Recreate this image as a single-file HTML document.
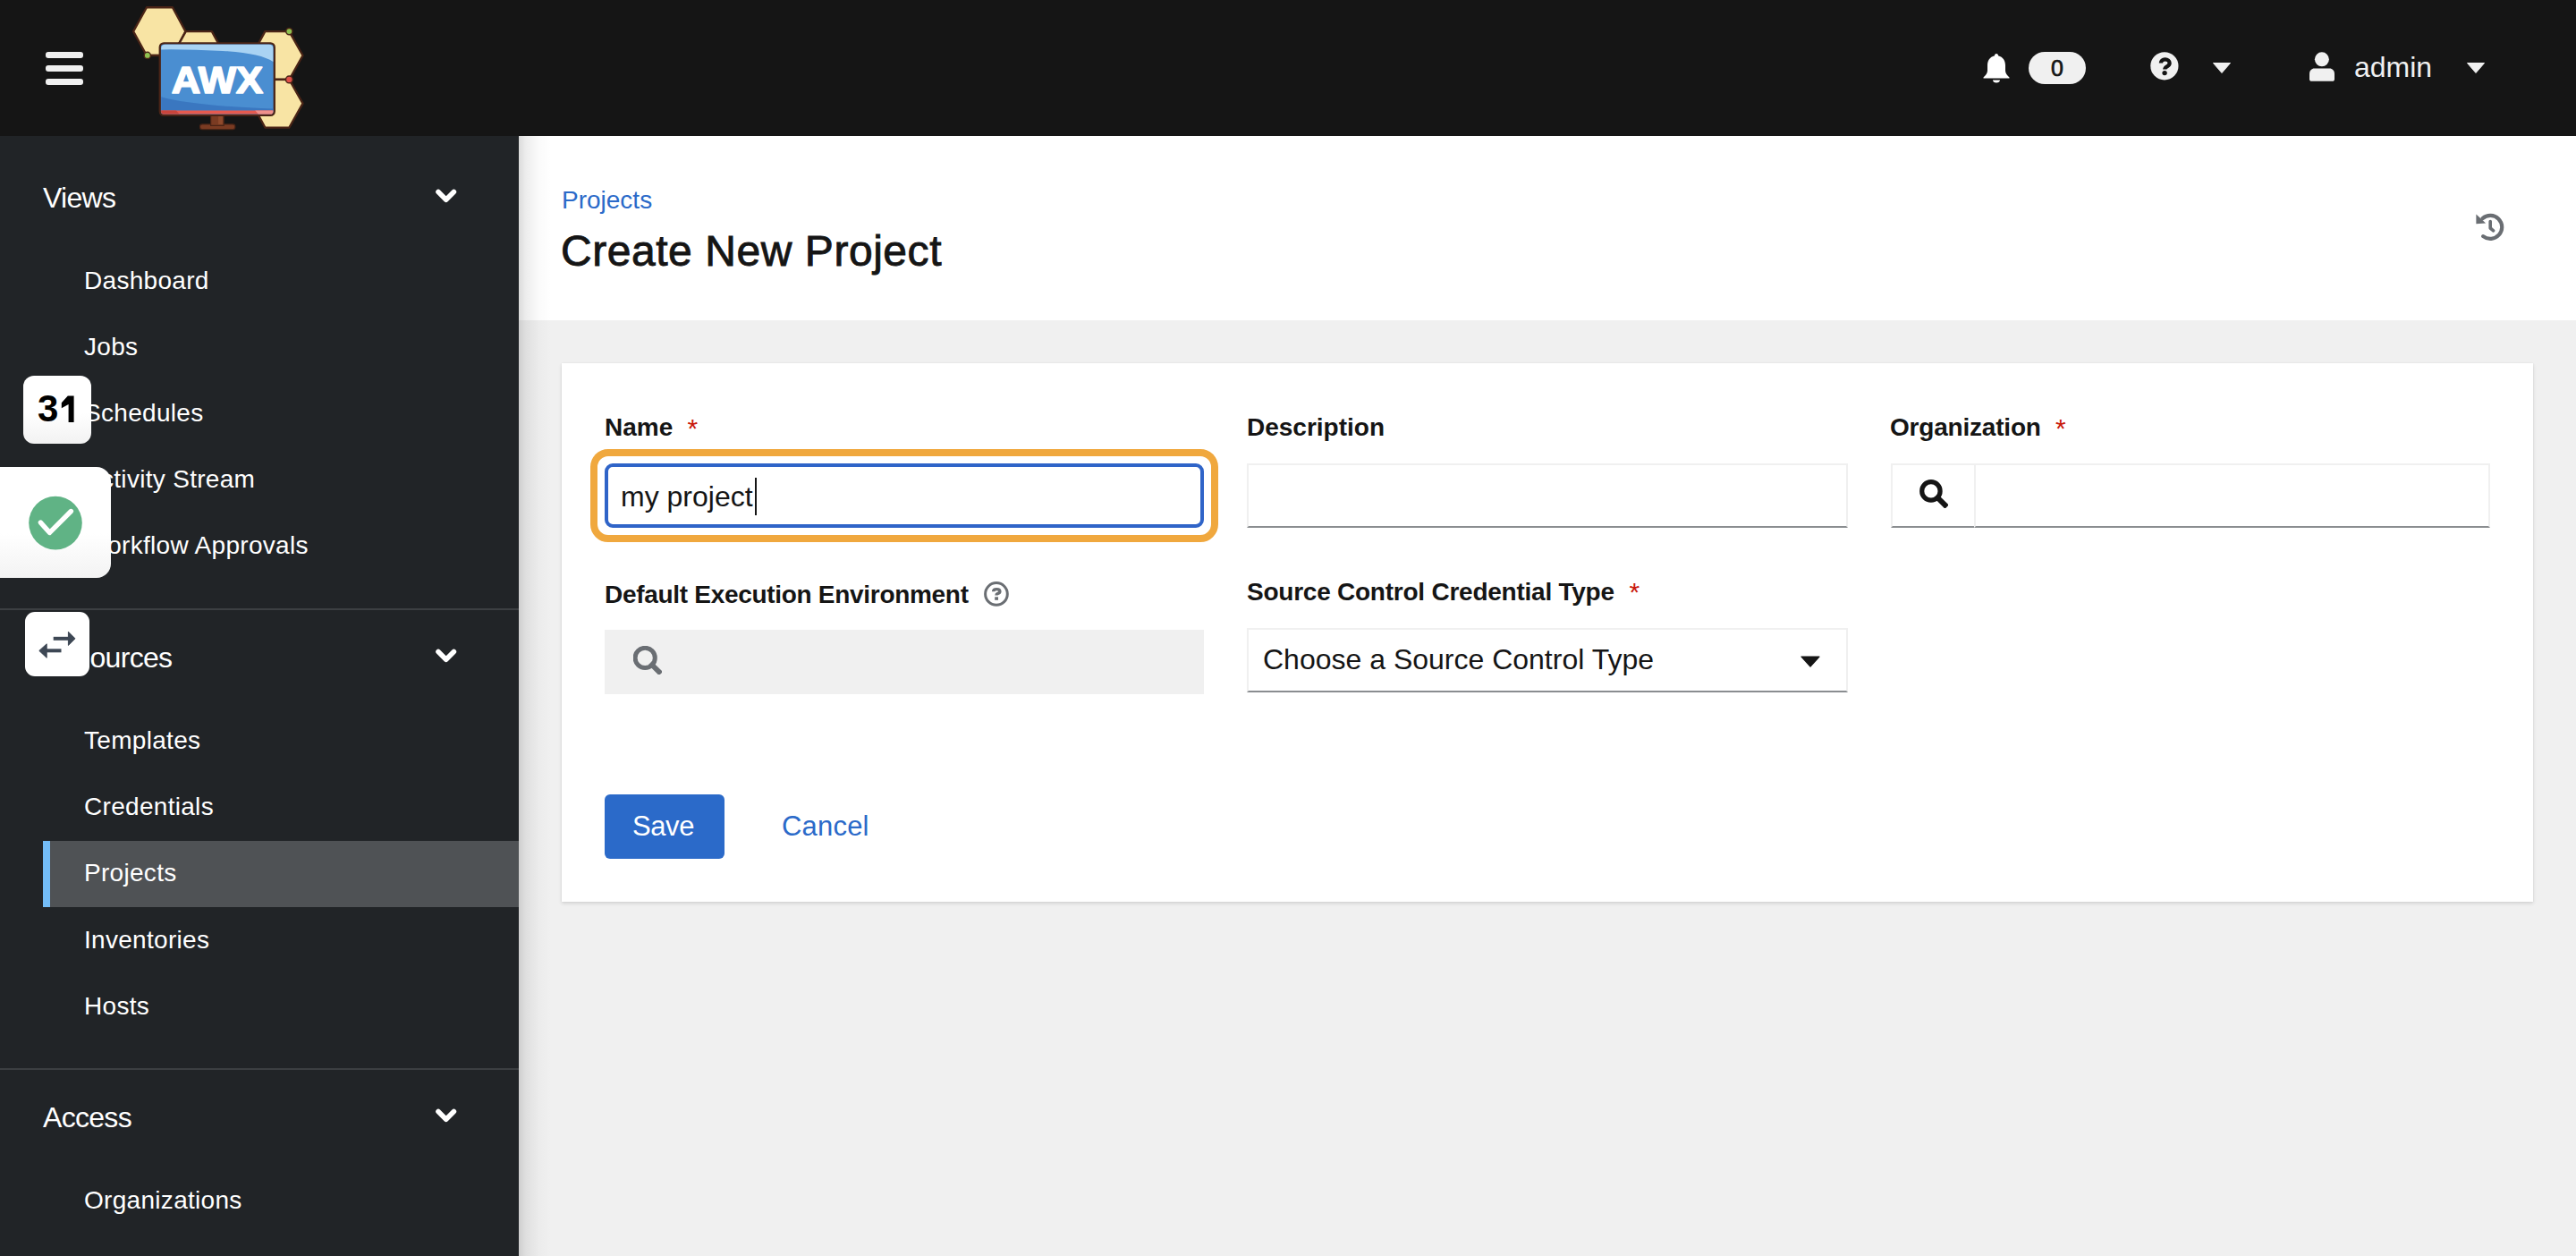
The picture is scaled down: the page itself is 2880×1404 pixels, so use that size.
<!DOCTYPE html>
<html><head><meta charset="utf-8">
<style>
*{margin:0;padding:0;box-sizing:border-box}
html,body{width:2880px;height:1404px;overflow:hidden;background:#f0f0f0;font-family:"Liberation Sans",sans-serif}
.a{position:absolute;white-space:nowrap}
#mast{position:absolute;left:0;top:0;width:2880px;height:152px;background:#151515}
#side{position:absolute;left:0;top:152px;width:580px;height:1252px;background:#212427}
#phead{position:absolute;left:580px;top:152px;width:2300px;height:206px;background:#fff}
#shadow{position:absolute;left:580px;top:152px;width:36px;height:1252px;background:linear-gradient(to right,rgba(0,0,0,.14),rgba(0,0,0,.07) 8px,rgba(0,0,0,.02) 22px,rgba(0,0,0,0))}
#card{position:absolute;left:628px;top:406px;width:2204px;height:602px;background:#fff;box-shadow:0 2px 4px rgba(3,3,3,.12),0 0 2px rgba(3,3,3,.06)}
.nav{color:#fff;font-size:28px;line-height:28px;letter-spacing:0.3px}
.sect{color:#fff;font-size:32px;line-height:32px;letter-spacing:-0.7px}
.sep{position:absolute;left:0;width:580px;height:2px;background:#3c3f42}
.lbl{color:#151515;font-size:28px;line-height:28px;font-weight:bold}
.req{color:#c9190b;font-size:30px;line-height:30px;font-weight:normal}
.inp{position:absolute;background:#fff;border:2px solid #f0f0f0;border-bottom-color:#8a8d90}
</style></head><body>
<div id="mast">
<div class="a" style="left:51px;top:57.6px;width:42px;height:7.2px;border-radius:3px;background:#f0f0f0"></div>
<div class="a" style="left:51px;top:72.7px;width:42px;height:7.2px;border-radius:3px;background:#f0f0f0"></div>
<div class="a" style="left:51px;top:87.8px;width:42px;height:7.2px;border-radius:3px;background:#f0f0f0"></div>
<svg class="a" style="left:140px;top:0" width="210" height="152" viewBox="0 0 1735 1256">
 <g stroke="#4a2416" stroke-width="19" stroke-linejoin="round" fill="#f8e4a4">
  <polygon points="75,290 198,68 437,68 557,290 437,512 198,512"/>
  <polygon points="437,512 560,290 800,290 920,512 800,734 560,734"/>
  <polygon points="1172,512 1292,290 1515,290 1640,512 1515,735 1292,735"/>
  <polygon points="1172,955 1292,735 1515,735 1640,955 1515,1178 1292,1178"/>
  <line x1="205" y1="512" x2="330" y2="512"/>
  <line x1="1370" y1="735" x2="1515" y2="735"/>
 </g>
 <rect x="690" y="1148" width="325" height="48" rx="22" fill="#7a3b22" stroke="#4a2416" stroke-width="10"/>
 <rect x="790" y="1060" width="120" height="100" fill="#7a3b22" stroke="#4a2416" stroke-width="10"/>
 <rect x="860" y="1070" width="40" height="78" fill="#8f4a2c"/>
 <rect x="320" y="400" width="1058" height="665" rx="36" fill="#4a8ed1" stroke="#4a2416" stroke-width="19"/>
 <path d="M332 450 Q332 412 370 412 L1328 412 Q1366 412 1366 450 L1366 570 Q1250 490 900 470 Q600 455 332 458 Z" fill="#a9d3f3"/>
 <path d="M332 895 Q600 975 1366 1005 L1366 1022 L332 1022 Z" fill="#3a77c0"/>
 <path d="M332 1020 L1366 1020 L1366 1028 Q1366 1054 1340 1054 L358 1054 Q332 1054 332 1028 Z" fill="#e65a4f"/>
 <path d="M332 1020 L470 1020 L500 1054 L358 1054 Q332 1054 332 1028 Z" fill="#c9443b"/>
 <path d="M1200 1020 L1366 1020 L1366 1028 Q1366 1054 1340 1054 L1230 1054 Z" fill="#f0908a"/>
 <text x="850" y="860" text-anchor="middle" font-family="Liberation Sans" font-weight="bold" font-size="345" fill="#fff" stroke="#fff" stroke-width="14" stroke-linejoin="round" textLength="845" lengthAdjust="spacingAndGlyphs">AWX</text>
 <g stroke="#4a2416" stroke-width="12">
  <circle cx="205" cy="512" r="30" fill="#8fc250"/>
  <circle cx="1515" cy="290" r="30" fill="#8fc250"/>
  <circle cx="1515" cy="735" r="32" fill="#e05048"/>
 </g>
</svg>
<svg class="a" style="left:2217px;top:60px" width="30" height="33" viewBox="0 0 30 33"><path d="M15 0 C16.5 0 17 1 17 2.2 C22.5 3.5 25 8 25 13 L25 19 C25 22 27 24 29.5 26.5 L29.5 27.5 L0.5 27.5 L0.5 26.5 C3 24 5 22 5 19 L5 13 C5 8 7.5 3.5 13 2.2 C13 1 13.5 0 15 0 Z M11 29.5 L19 29.5 C19 31.5 17.3 32.5 15 32.5 C12.7 32.5 11 31.5 11 29.5 Z" fill="#fff"/></svg>
<div class="a" style="left:2268px;top:58px;width:64px;height:36px;border-radius:18px;background:#f0f0f0;color:#151515;font-size:25px;line-height:36px;text-align:center;-webkit-text-stroke:0.7px #151515">0</div>
<svg class="a" style="left:2404px;top:58px" width="32" height="32" viewBox="0 0 32 32"><circle cx="15.9" cy="15.8" r="15.6" fill="#f0f0f0"/><path d="M11.9 12.6 C11.9 10 13.8 8.4 16.6 8.4 C19.6 8.4 21.6 10.2 21.6 12.6 C21.6 15 19.8 15.8 18.4 16.6 C17.2 17.3 16.3 18 16.3 19.6" fill="none" stroke="#151515" stroke-width="4.3"/><circle cx="16.1" cy="23.6" r="2.7" fill="#151515"/></svg>
<svg class="a" style="left:2474px;top:69.5px" width="20" height="12" viewBox="0 0 20 12"><path d="M0.5 0.5 L19.5 0.5 L10 11.5 Z" fill="#f0f0f0" stroke="#f0f0f0" stroke-width="1" stroke-linejoin="round"/></svg>
<svg class="a" style="left:2581px;top:57.5px" width="30" height="33" viewBox="0 0 30 33"><circle cx="14.9" cy="8.3" r="8" fill="#f0f0f0"/><path d="M6.5 18.5 L23.5 18.5 C26.5 18.5 29 21 29 24.5 L29 30.5 C29 32 28 32.8 26.7 32.8 L3.3 32.8 C2 32.8 1 32 1 30.5 L1 24.5 C1 21 3.5 18.5 6.5 18.5 Z" fill="#f0f0f0"/></svg>
<div class="a" style="left:2632px;top:59px;color:#f0f0f0;font-size:32px;line-height:32px">admin</div>
<svg class="a" style="left:2758px;top:70px" width="20" height="12" viewBox="0 0 20 12"><path d="M0.5 0.5 L19.5 0.5 L10 11.5 Z" fill="#f0f0f0" stroke="#f0f0f0" stroke-width="1" stroke-linejoin="round"/></svg>
</div>
<div id="side"></div>
<div class="a sect" style="left:48px;top:205px">Views</div><svg class="a" style="left:484px;top:210px" width="30" height="22" viewBox="0 0 30 22"><path d="M6 4.5 L14.7 13.2 L23.4 4.5" fill="none" stroke="#fff" stroke-width="5.6" stroke-linecap="round" stroke-linejoin="round"/></svg>
<div class="a nav" style="left:94px;top:300px">Dashboard</div>
<div class="a nav" style="left:94px;top:374px">Jobs</div>
<div class="a nav" style="left:94px;top:448px">Schedules</div>
<div class="a nav" style="left:94px;top:522px">Activity Stream</div>
<div class="a nav" style="left:94px;top:596px">Workflow Approvals</div>
<div class="sep" style="top:680px"></div>
<div class="a sect" style="left:100.5px;top:719.3px">ources</div><svg class="a" style="left:484px;top:724px" width="30" height="22" viewBox="0 0 30 22"><path d="M6 4.5 L14.7 13.2 L23.4 4.5" fill="none" stroke="#fff" stroke-width="5.6" stroke-linecap="round" stroke-linejoin="round"/></svg>
<div class="a nav" style="left:94px;top:814px">Templates</div>
<div class="a nav" style="left:94px;top:888px">Credentials</div>
<div class="a" style="left:48px;top:940px;width:532px;height:74px;background:#4f5255;border-left:8px solid #73bcf7"></div>
<div class="a nav" style="left:94px;top:962px">Projects</div>
<div class="a nav" style="left:94px;top:1037px">Inventories</div>
<div class="a nav" style="left:94px;top:1111px">Hosts</div>
<div class="sep" style="top:1194px"></div>
<div class="a sect" style="left:48px;top:1233px">Access</div><svg class="a" style="left:484px;top:1238px" width="30" height="22" viewBox="0 0 30 22"><path d="M6 4.5 L14.7 13.2 L23.4 4.5" fill="none" stroke="#fff" stroke-width="5.6" stroke-linecap="round" stroke-linejoin="round"/></svg>
<div class="a nav" style="left:94px;top:1328px">Organizations</div>

<div id="phead"></div>
<div id="shadow"></div>
<div id="card"></div>
<div class="a" style="left:628px;top:210px;color:#2b6ac9;font-size:28px;line-height:28px">Projects</div>
<div class="a" style="left:627px;top:256.5px;color:#151515;font-size:48px;line-height:48px;letter-spacing:0.55px;-webkit-text-stroke:0.9px #151515">Create New Project</div>
<svg class="a" style="left:2750px;top:225px" width="60" height="50" viewBox="0 0 60 50"><path d="M25.6 19.1 A13 13 0 1 1 26.2 39.1" fill="none" stroke="#6a6e73" stroke-width="4.2" stroke-linecap="round"/><polygon points="18.4,14.6 18.4,25.3 29.1,24.6" fill="#6a6e73"/><path d="M34.2 22.6 L34.2 30 L37.6 32.8" fill="none" stroke="#6a6e73" stroke-width="3.6" stroke-linecap="round" stroke-linejoin="round"/></svg>

<div class="a lbl" style="left:676px;top:464.2px">Name</div>
<div class="a req" style="left:768.5px;top:463.5px">*</div>
<div class="a" style="left:660px;top:502px;width:702px;height:104px;border:8.4px solid #f0a83e;border-radius:20px"></div>
<div class="a" style="left:676px;top:518px;width:670px;height:72px;border:4.5px solid #2f64c8;border-radius:9px;background:#fff"></div>
<div class="a" style="left:694px;top:538.6px;color:#151515;font-size:32px;line-height:32px">my project</div>
<div class="a" style="left:844px;top:534px;width:2.2px;height:42px;background:#151515"></div>

<div class="a lbl" style="left:1394px;top:464.2px">Description</div>
<div class="inp" style="left:1394px;top:518px;width:672px;height:72px"></div>

<div class="a lbl" style="left:2113px;top:464.2px;letter-spacing:-0.2px">Organization</div>
<div class="a req" style="left:2298px;top:463.5px">*</div>
<div class="inp" style="left:2114px;top:518px;width:95px;height:72px"></div>
<div class="inp" style="left:2207px;top:518px;width:577px;height:72px"></div>
<svg class="a" style="left:2146px;top:536px" width="32" height="32" viewBox="0 0 32 32"><circle cx="12.9" cy="12.9" r="10.2" fill="none" stroke="#151515" stroke-width="5.2"/><path d="M20.5 20.5 L28.5 28.5" stroke="#151515" stroke-width="6" stroke-linecap="square"/></svg>

<div class="a lbl" style="left:676px;top:650.6px;letter-spacing:-0.3px">Default Execution Environment</div>
<svg class="a" style="left:1100px;top:650px" width="28" height="28" viewBox="0 0 28 28"><circle cx="13.95" cy="13.95" r="12.35" fill="none" stroke="#6a6e73" stroke-width="3"/><path d="M10.6 11.2 C10.6 9.3 12.3 8.6 14.3 8.6 C16.5 8.6 17.9 9.7 17.9 11.2 C17.9 12.8 16.6 13.2 15.3 13.6 C14.2 14 13.95 14.3 13.95 15.5" fill="none" stroke="#6a6e73" stroke-width="3.4"/><rect x="12.2" y="17.3" width="3.8" height="3.5" fill="#6a6e73"/></svg>
<div class="a" style="left:676px;top:704px;width:670px;height:72px;background:#f0f0f0"></div>
<svg class="a" style="left:708px;top:722px" width="32" height="32" viewBox="0 0 32 32"><circle cx="13.2" cy="13.4" r="11.1" fill="none" stroke="#6a6e73" stroke-width="5"/><path d="M21 21.2 L28.8 29" stroke="#6a6e73" stroke-width="5.8" stroke-linecap="square"/></svg>

<div class="a lbl" style="left:1394px;top:648.2px;letter-spacing:-0.24px">Source Control Credential Type</div>
<div class="a req" style="left:1821.5px;top:647.2px">*</div>
<div class="inp" style="left:1394px;top:702px;width:672px;height:72px"></div>
<div class="a" style="left:1412px;top:721.2px;color:#151515;font-size:32px;line-height:32px">Choose a Source Control Type</div>
<svg class="a" style="left:2013px;top:733px" width="22" height="13" viewBox="0 0 22 13"><path d="M1 1 L21 1 L11 12 Z" fill="#151515" stroke="#151515" stroke-width="1.2" stroke-linejoin="round"/></svg>

<div class="a" style="left:676px;top:888px;width:134px;height:72px;background:#2b6ac9;border-radius:6px"></div>
<div class="a" style="left:707px;top:907.8px;color:#fff;font-size:31px;line-height:31px;letter-spacing:-0.4px">Save</div>
<div class="a" style="left:874px;top:907.8px;color:#2b6ac9;font-size:31px;line-height:31px;letter-spacing:0.2px">Cancel</div>

<div class="a" style="left:26px;top:420px;width:76px;height:76px;border-radius:12px;background:linear-gradient(#fff 55%,#f2f2f2)"></div>
<div class="a" style="left:42px;top:436px;color:#000;font-size:42px;line-height:42px;font-weight:bold">3</div><svg class="a" style="left:0;top:400px" width="100" height="100" viewBox="0 400 100 100"><polygon points="76.6,442.4 82.6,442.4 82.6,472 76.6,472 76.6,452 68.8,456.2 68.8,450.2 75.8,442.4" fill="#000"/></svg>
<div class="a" style="left:-20px;top:522px;width:144px;height:124px;border-radius:16px;background:linear-gradient(#fff 60%,#f3f3f3)"></div>
<svg class="a" style="left:0;top:522px" width="124" height="124" viewBox="0 522 124 124"><circle cx="62" cy="584.6" r="29.8" fill="#60b385"/><path d="M45.4 584.1 L55.5 595.4 L79.4 571.5" fill="none" stroke="#fff" stroke-width="5.4" stroke-linecap="round" stroke-linejoin="round"/></svg>
<div class="a" style="left:28px;top:684px;width:72px;height:72px;border-radius:11px;background:#fff"></div>
<svg class="a" style="left:0;top:670px" width="130" height="100" viewBox="0 670 130 100"><rect x="59.7" y="711.8" width="17" height="4" fill="#3d4754"/><polygon points="76.4,706.2 84,713.8 76.4,721.4" fill="#3d4754" stroke="#3d4754" stroke-width="1" stroke-linejoin="round"/><rect x="51.5" y="725.3" width="17" height="4" fill="#3d4754"/><polygon points="52.2,719.8 43.8,727.4 52.2,735.3" fill="#3d4754" stroke="#3d4754" stroke-width="1" stroke-linejoin="round"/></svg>

</body></html>
